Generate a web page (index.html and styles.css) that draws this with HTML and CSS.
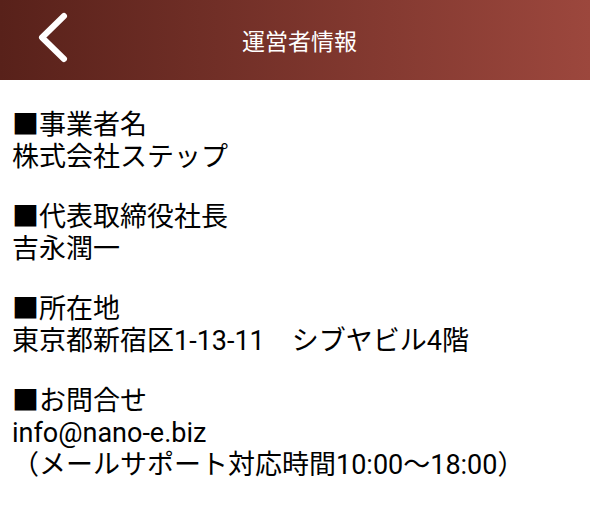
FILE: index.html
```html
<!DOCTYPE html>
<html lang="ja">
<head>
<meta charset="utf-8">
<link rel="stylesheet" href="styles.css">
</head>
<body>
<header class="bar">
  <a class="back" href="#" aria-label="戻る">
    <svg width="40" height="60" viewBox="0 0 40 60"><path d="M28 6 L6 27.5 L28 49" fill="none" stroke="#fff" stroke-width="6" stroke-linecap="round" stroke-linejoin="round"/></svg>
  </a>
  <h1 class="title">運営者情報</h1>
</header>
<main class="info">
  <p>■事業者名<br>株式会社ステップ</p>
  <p>■代表取締役社長<br>吉永潤一</p>
  <p>■所在地<br>東京都新宿区1-13-11　シブヤビル4階</p>
  <p>■お問合せ<br>info@nano-e.biz<br>（メールサポート対応時間10:00〜18:00）</p>
</main>
</body>
</html>
```
FILE: styles.css
```css
html, body {
  margin: 0;
  padding: 0;
  background: #fff;
}
body {
  font-family: Roboto, "Noto Sans CJK JP", sans-serif;
  color: #000;
}
.bar {
  height: 80px;
  background: linear-gradient(to right, #58211a, #9c473d);
  display: flex;
  align-items: center;
  justify-content: center;
  position: relative;
}
.back {
  position: absolute;
  left: 36px;
  top: 10px;
  display: block;
  width: 40px;
  height: 60px;
}
.back svg { display: block; }
.title {
  margin: 0 0 0 9px;
  color: #fff;
  font-size: 23px;
  font-weight: normal;
  font-family: "Noto Sans CJK JP", sans-serif;
  line-height: 1;
}
.info {
  padding: 29px 12px 0;
}
.info p {
  margin: 0 0 28px;
  font-size: 27px;
  line-height: 32px;
}
```
